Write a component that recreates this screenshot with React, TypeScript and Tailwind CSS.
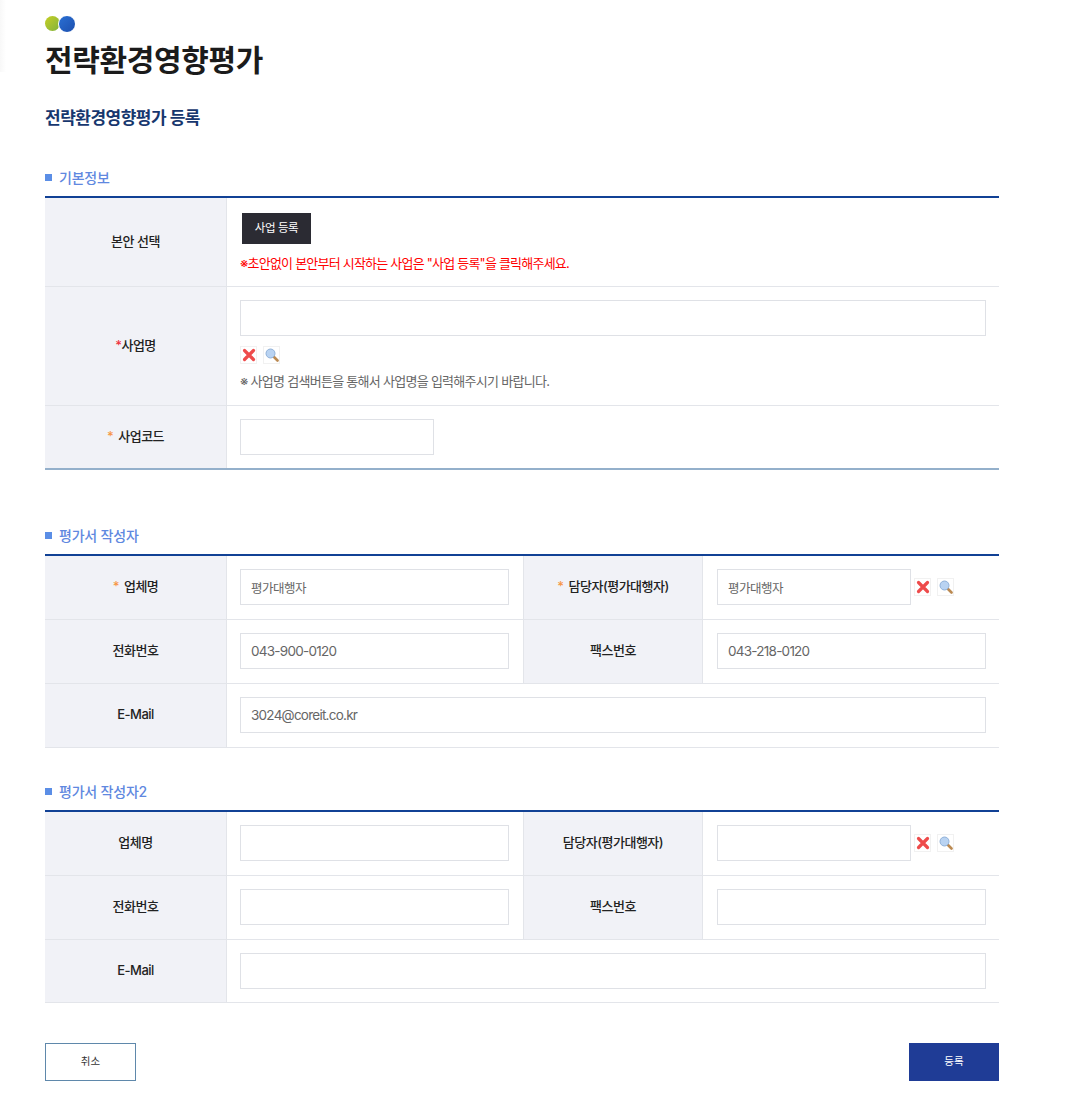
import { ReactNode } from 'react'

const labelCell =
  'flex shrink-0 items-center justify-center bg-[#f1f2f7] border-r border-[#e3e5ea] text-[13px] font-medium text-[#222] tracking-[-0.5px]'
const inputCls = 'h-9 border border-[#dfe1e6] bg-white outline-none text-[#666] px-[10px]'
const korInput = 'text-[12.5px] tracking-[-0.5px]'
const numInput = 'text-[13.5px] tracking-[-0.75px]'

function Star({ color = 'text-[#f79646]', gap = true }: { color?: string; gap?: boolean }) {
  return <span className={`${color} ${gap ? 'mr-[5px]' : ''}`}>*</span>
}

function XIcon() {
  return (
    <span className="flex h-[18px] w-[17px] items-center justify-center border border-[#f1f1f1] bg-white">
      <svg width="14" height="14" viewBox="0 0 14 14">
        <path d="M2.5 2.5 L11.5 11.5 M11.5 2.5 L2.5 11.5" stroke="#ee4b4b" strokeWidth="3.2" strokeLinecap="round" />
      </svg>
    </span>
  )
}

function SearchIcon() {
  return (
    <span className="flex h-[18px] w-[17px] items-center justify-center border border-[#f1f1f1] bg-white">
      <svg width="14" height="14" viewBox="0 0 14 14">
        <path d="M9 9 L12.5 12.5" stroke="#bb8a52" strokeWidth="2.6" strokeLinecap="round" />
        <circle cx="5.5" cy="5.5" r="4.5" fill="#b9d3f2" stroke="#8fb0d8" strokeWidth="1" />
      </svg>
    </span>
  )
}

function SectionTitle({ children, mt }: { children: ReactNode; mt: string }) {
  return (
    <div className={`${mt} flex h-[20px] items-center gap-[7px] pb-[2px] text-[14px] font-medium text-[#5f88e0] tracking-[-0.2px]`}>
      <span className="h-[7px] w-[7px] bg-[#5b8ee6]" />
      {children}
    </div>
  )
}

function Row({ children, h }: { children: ReactNode; h: string }) {
  return <div className={`flex ${h} border-b border-[#e3e5ea]`}>{children}</div>
}

function Label({ children, w = 'w-[182px]' }: { children: ReactNode; w?: string }) {
  return <div className={`${labelCell} ${w}`}>{children}</div>
}

function PersonTable({ data, required, lastH = 'h-[64px]' }: { data: string[]; required?: boolean; lastH?: string }) {
  return (
    <div className="mt-[8px] border-t-2 border-[#114195]">
      <Row h="h-[64px]">
        <Label w="w-[182px] pb-[1px]">{required && <Star />}업체명</Label>
        <div className="flex w-[296px] items-center pb-[1px] pl-[13px]">
          <input readOnly value={data[0]} className={`${inputCls} ${korInput} w-[269px]`} />
        </div>
        <Label w="w-[180px] border-l pb-[1px]">{required && <Star />}담당자(평가대행자)</Label>
        <div className="flex flex-1 items-center pb-[1px] pl-[14px]">
          <input readOnly value={data[1]} className={`${inputCls} ${korInput} w-[194px]`} />
          <span className="ml-[3px] flex gap-[6px]">
            <XIcon />
            <SearchIcon />
          </span>
        </div>
      </Row>
      <Row h="h-[64px]">
        <Label w="w-[182px] pb-[1px]">전화번호</Label>
        <div className="flex w-[296px] items-center pb-[1px] pl-[13px]">
          <input readOnly value={data[2]} className={`${inputCls} ${numInput} w-[269px]`} />
        </div>
        <Label w="w-[180px] border-l pb-[1px]">팩스번호</Label>
        <div className="flex flex-1 items-center pb-[1px] pl-[14px]">
          <input readOnly value={data[3]} className={`${inputCls} ${numInput} w-[269px]`} />
        </div>
      </Row>
      <Row h={lastH}>
        <Label w="w-[182px] pb-[1px]">E-Mail</Label>
        <div className="flex flex-1 items-center pb-[1px] pl-[13px]">
          <input readOnly value={data[4]} className={`${inputCls} ${numInput} w-[746px]`} />
        </div>
      </Row>
    </div>
  )
}

export default function App() {
  return (
    <div className="relative h-[1106px] w-[1080px] bg-white pl-[45px] pt-[15px] font-['Inter','Noto_Sans_CJK_KR',sans-serif]">
      {/* faint edge shadow at the top left */}
      <div className="absolute left-0 top-0 h-[72px] w-[6px] bg-linear-to-r from-[#f8f8f8] to-white" />
      <div className="w-[954px]">
        <div className="flex h-[17px] items-center">
          <span className="h-[15px] w-[15px] rounded-full bg-linear-to-br from-[#c6cf1e] to-[#7fb23c]" />
          <span className="ml-[-2px] h-[18px] w-[18px] rounded-full border border-white bg-linear-to-br from-[#2a70d4] to-[#1d4fae]" />
        </div>
        <h1 className="mt-[4px] h-[48px] text-[30px] font-bold leading-[48px] tracking-[-0.35px] text-[#1b1b1b]">
          전략환경영향평가
        </h1>
        <h2 className="mt-[22px] h-[24px] text-[17px] font-bold leading-[24px] tracking-[-0.5px] text-[#17376e]">
          전략환경영향평가 등록
        </h2>

        <SectionTitle mt="mt-[38px]">기본정보</SectionTitle>
        <div className="mt-[8px] border-t-2 border-[#114195]">
          <Row h="h-[89px]">
            <Label>본안 선택</Label>
            <div className="flex flex-1 flex-col pl-[13px] pt-[15px]">
              <button className="ml-[2px] h-[31px] w-[69px] bg-[#2b2b33] text-[11.5px] text-white tracking-[-0.4px]">
                사업 등록
              </button>
              <p className="mt-[10px] text-[13px] leading-[18px] tracking-[-0.78px] text-[#ff0000]">
                ※초안없이 본안부터 시작하는 사업은 "사업 등록"을 클릭해주세요.
              </p>
            </div>
          </Row>
          <Row h="h-[119px]">
            <Label>
              <Star color="text-[#ef3340]" gap={false} />
              사업명
            </Label>
            <div className="flex flex-1 flex-col pl-[13px] pt-[13px]">
              <input readOnly className={`${inputCls} w-[746px]`} />
              <span className="mt-[10px] flex gap-[6px]">
                <XIcon />
                <SearchIcon />
              </span>
              <p className="mt-[8px] text-[13px] leading-[18px] tracking-[-0.72px] text-[#666]">
                ※ 사업명 검색버튼을 통해서 사업명을 입력해주시기 바랍니다.
              </p>
            </div>
          </Row>
          <div className="flex h-[64px] border-b-2 border-[#94b0cb]">
            <Label>
              <Star />
              사업코드
            </Label>
            <div className="flex flex-1 items-center pl-[13px]">
              <input readOnly className={`${inputCls} w-[194px]`} />
            </div>
          </div>
        </div>

        <SectionTitle mt="mt-[56px]">평가서 작성자</SectionTitle>
        <PersonTable required data={['평가대행자', '평가대행자', '043-900-0120', '043-218-0120', '3024@coreit.co.kr']} />

        <SectionTitle mt="mt-[34px]">평가서 작성자2</SectionTitle>
        <PersonTable lastH="h-[63px]" data={['', '', '', '', '']} />

        <div className="mt-[40px] flex justify-between">
          <button className="h-[38px] w-[91px] border border-[#5f88ab] bg-white text-[10.5px] text-[#333]">취소</button>
          <button className="h-[38px] w-[90px] bg-[#1f3c96] text-[10.5px] text-white">등록</button>
        </div>
      </div>
    </div>
  )
}
